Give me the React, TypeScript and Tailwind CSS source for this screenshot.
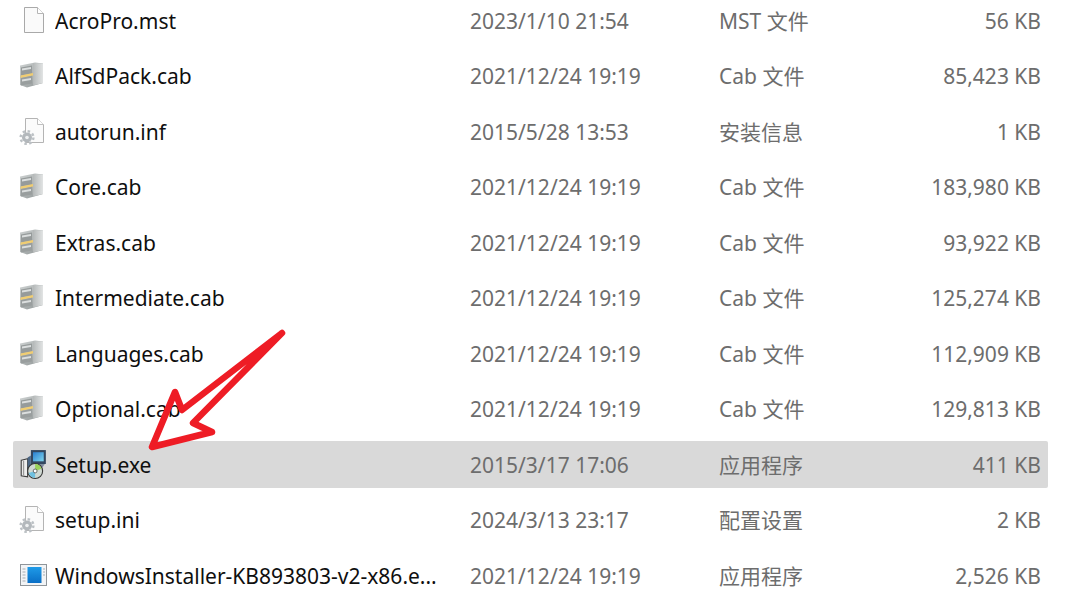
const FONT = '"Noto Sans", "Noto Sans CJK SC", sans-serif';

function Blank() {
  return (
    <svg width="26" height="28" viewBox="0 0 26 28">
      <path d="M5.5 1.5H18.5L24.5 7.5V26.5H5.5Z" fill="#fafafa" stroke="#a9a9a9" />
      <path d="M18.5 1.5V7.5H24.5" fill="#fff" stroke="#b5b5b5" />
    </svg>
  );
}

function Cabinet() {
  return (
    <svg width="26" height="28" viewBox="0 0 26 28">
      <defs>
        <linearGradient id="cabFront" x1="0" y1="0" x2="1" y2="1">
          <stop offset="0" stopColor="#ced2d2" />
          <stop offset="1" stopColor="#8d9393" />
        </linearGradient>
        <linearGradient id="cabSide" x1="0" y1="0" x2="1" y2="0">
          <stop offset="0" stopColor="#b4b8b8" />
          <stop offset="1" stopColor="#e2e4e4" />
        </linearGradient>
      </defs>
      <path d="M1 4.5L16 1.5L24 2.5V22L8 26.5L1 24Z" fill="url(#cabFront)" />
      <path d="M14 2L24 2.5V22L14 24.5Z" fill="url(#cabSide)" />
      <path d="M2 6.5L13 4.5V12.5L2 14.5Z" fill="#969b9b" />
      <path d="M3 7.5L12 6V8L3 9.5Z" fill="#dcdfdf" />
      <path d="M1.5 14.5L14 12V14.5L1.5 17Z" fill="#f0cd72" />
      <path d="M2 17L13 14.8V22.5L2 24.5Z" fill="#999e9e" />
      <path d="M3 18.5L12 17V19L3 20.5Z" fill="#dcdfdf" />
    </svg>
  );
}

function Settings() {
  return (
    <svg width="26" height="28" viewBox="0 0 26 28">
      <path d="M6.5 1.5H18.5L24.5 7.5V25.5H6.5Z" fill="#fbfbfb" stroke="#b4b4b4" />
      <path d="M18.5 1.5V7.5H24.5" fill="#fff" stroke="#c0c0c0" />
      <circle cx="8" cy="20.5" r="5" fill="#b3b8bc" />
      <circle cx="8" cy="20.5" r="6.4" fill="none" stroke="#bcc1c5" strokeWidth="2.4" strokeDasharray="2.5 2.5" />
      <circle cx="8" cy="20.5" r="1.8" fill="#eef0f1" />
    </svg>
  );
}

function Installer() {
  return (
    <svg width="28" height="30" viewBox="0 0 26 28">
      <defs>
        <linearGradient id="scr" x1="0" y1="0" x2="1" y2="1">
          <stop offset="0" stopColor="#2a7fd0" />
          <stop offset="1" stopColor="#7fd6ee" />
        </linearGradient>
      </defs>
      <path d="M2 10.5L8 9V26L2 25Z" fill="#eeeeee" stroke="#3d3d3d" />
      <path d="M4.2 11V24.5" stroke="#9a9a9a" strokeWidth="1.2" />
      <rect x="11" y="1" width="14" height="13" fill="#33475f" />
      <rect x="13" y="3" width="10" height="8.5" fill="url(#scr)" />
      <path d="M8 8L11 6V17H8Z" fill="#4b6684" />
      <path d="M12 14H24L22 17H11Z" fill="#7f8da0" />
      <circle cx="15" cy="20.5" r="7" fill="#cfd8d2" stroke="#333" />
      <path d="M15 14A6.5 6.5 0 0 1 21 18.5L15 20.5Z" fill="#9ad35a" />
      <path d="M15 27A6.5 6.5 0 0 1 9 22.5L15 20.5Z" fill="#6fc0e0" />
      <circle cx="15" cy="20.5" r="1.8" fill="#fff" stroke="#444" strokeWidth="0.7" />
    </svg>
  );
}

function Msi() {
  return (
    <svg width="28" height="28" viewBox="0 0 28 28">
      <defs>
        <linearGradient id="msiBlue" x1="0" y1="0" x2="0" y2="1">
          <stop offset="0" stopColor="#1f9be8" />
          <stop offset="1" stopColor="#0a6fc6" />
        </linearGradient>
      </defs>
      <rect x="1.5" y="3.5" width="26" height="21" fill="#f2f4f6" stroke="#8f959a" />
      <rect x="8.5" y="6" width="14" height="16" fill="url(#msiBlue)" />
      <path d="M3.5 8H6.5M3.5 11H6.5M3.5 14H6.5M3.5 17H6.5M3.5 20H6.5" stroke="#a8adb2" />
      <path d="M24 8H26M24 11H26M24 14H26" stroke="#a8adb2" />
    </svg>
  );
}

const rows = [
  { icon: <Blank />, name: "AcroPro.mst", date: "2023/1/10 21:54", type: "MST 文件", size: "56 KB" },
  { icon: <Cabinet />, name: "AlfSdPack.cab", date: "2021/12/24 19:19", type: "Cab 文件", size: "85,423 KB" },
  { icon: <Settings />, name: "autorun.inf", date: "2015/5/28 13:53", type: "安装信息", size: "1 KB" },
  { icon: <Cabinet />, name: "Core.cab", date: "2021/12/24 19:19", type: "Cab 文件", size: "183,980 KB" },
  { icon: <Cabinet />, name: "Extras.cab", date: "2021/12/24 19:19", type: "Cab 文件", size: "93,922 KB" },
  { icon: <Cabinet />, name: "Intermediate.cab", date: "2021/12/24 19:19", type: "Cab 文件", size: "125,274 KB" },
  { icon: <Cabinet />, name: "Languages.cab", date: "2021/12/24 19:19", type: "Cab 文件", size: "112,909 KB" },
  { icon: <Cabinet />, name: "Optional.cab", date: "2021/12/24 19:19", type: "Cab 文件", size: "129,813 KB" },
  { icon: <Installer />, name: "Setup.exe", date: "2015/3/17 17:06", type: "应用程序", size: "411 KB", selected: true },
  { icon: <Settings />, name: "setup.ini", date: "2024/3/13 23:17", type: "配置设置", size: "2 KB" },
  { icon: <Msi />, name: "WindowsInstaller-KB893803-v2-x86.e...", date: "2021/12/24 19:19", type: "应用程序", size: "2,526 KB" },
];

export default function App() {
  return (
    <div className="relative h-[607px] w-[1080px] overflow-hidden bg-white text-[21px]" style={{ fontFamily: FONT }}>
      <div className="-mt-[3px] flex flex-col gap-[8.5px] pl-[13px] pr-[32px]">
        {rows.map((r) => (
          <div
            key={r.name}
            className={`flex h-[47px] shrink-0 items-center rounded-[2px] pt-[2px] ${r.selected ? "bg-[#d9d9d9]" : ""}`}
          >
            <div className="ml-[6px] flex h-[28px] w-[36px] shrink-0 -translate-y-[2px] items-center blur-[0.4px]">{r.icon}</div>
            <div className="w-[415px] shrink-0 truncate text-[#0f0f0f]">{r.name}</div>
            <div className="w-[249px] shrink-0 text-[#6d6d6d]">{r.date}</div>
            <div className="w-[200px] shrink-0 text-[#6d6d6d]">{r.type}</div>
            <div className="flex-1 whitespace-nowrap pr-[7px] text-right text-[#6d6d6d]">{r.size}</div>
          </div>
        ))}
      </div>
      <svg className="absolute left-0 top-0" width="1080" height="607" viewBox="0 0 1080 607" fill="none">
        <path
          d="M282 333L182 410L175 392L152 447L212 432L193 423Z"
          stroke="#ee1c25"
          strokeWidth="6.5"
          strokeLinejoin="round"
        />
      </svg>
    </div>
  );
}
